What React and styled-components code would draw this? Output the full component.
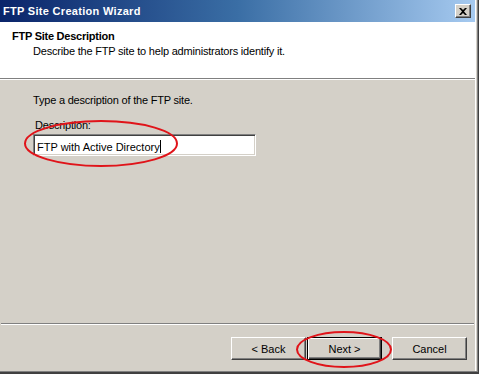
import React from "react";
import styled, { createGlobalStyle } from "styled-components";

const Global = createGlobalStyle`
  html, body { margin: 0; padding: 0; background: #d4d0c8; }
  body { font-family: "Liberation Sans", Arial, sans-serif; font-size: 11px; color: #000; letter-spacing: -0.2px; }
`;

const Window = styled.div`
  position: relative;
  width: 479px;
  height: 374px;
  box-sizing: border-box;
  display: flex;
  flex-direction: column;
  background: #d4d0c8;
  border-right: 1px solid #404040;
  border-bottom: 2px solid #404040;
  box-shadow: inset -1px -1px 0 #808080, inset -2px 0 0 #d4d0c8, inset -3px 0 0 #ffffff;
  overflow: hidden;
`;

const TitleBar = styled.div`
  height: 22px;
  flex: none;
  display: flex;
  align-items: center;
  justify-content: space-between;
  padding: 0 4px 0 3px;
  margin-right: 3px;
  background: linear-gradient(to right, #0a246a 0%, #3a6ea5 50%, #a6caf0 100%);
  color: #fff;
  font-weight: bold;
  font-size: 11px;
  letter-spacing: 0.3px;
`;

const CloseButton = styled.div`
  width: 16px;
  height: 14px;
  box-sizing: border-box;
  background: #d4d0c8;
  border: 1px solid;
  border-color: #fff #404040 #404040 #fff;
  box-shadow: inset -1px -1px 0 #808080;
  display: flex;
  align-items: center;
  justify-content: center;
`;

const Header = styled.div`
  height: 57px;
  flex: none;
  box-sizing: border-box;
  background: #fff;
  margin-right: 3px;
  border-bottom: 1px solid #808080;
  box-shadow: 0 1px 0 #fff;
  padding: 8px 0 0 12px;
`;

const HeaderTitle = styled.div`
  font-weight: bold;
  font-size: 11px;
  line-height: 13px;
  letter-spacing: -0.25px;
`;

const HeaderSub = styled.div`
  margin: 2px 0 0 21px;
  line-height: 13px;
`;

const Body = styled.div`
  flex: 1;
  padding: 15px 0 0 33px;
  margin-right: 3px;
`;

const Text = styled.div`
  line-height: 13px;
`;

const Label = styled.div`
  line-height: 13px;
  margin: 12px 0 2px 2px;
`;

const Input = styled.div`
  width: 223px;
  height: 22px;
  box-sizing: border-box;
  background: #fff;
  border: 1px solid;
  border-color: #808080 #fff #fff #808080;
  box-shadow: inset 1px 1px 0 #404040, inset -1px -1px 0 #d4d0c8;
  padding: 3px 0 0 3px;
  line-height: 14px;
  letter-spacing: 0;
  display: flex;
  align-items: center;
`;

const Caret = styled.span`
  display: inline-block;
  width: 1px;
  height: 13px;
  background: #000;
`;

const Separator = styled.div`
  height: 1px;
  margin: 0 4px 0 1px;
  background: #808080;
  border-bottom: 1px solid #fff;
  flex: none;
`;

const Footer = styled.div`
  height: 47px;
  flex: none;
  display: flex;
  align-items: flex-start;
  padding: 12px 0 0 231px;
  box-sizing: border-box;
  letter-spacing: 0;
`;

const Button = styled.div`
  width: 75px;
  height: 23px;
  box-sizing: border-box;
  display: flex;
  align-items: center;
  justify-content: center;
  background: #d4d0c8;
  margin-left: ${(p) => p.$gap || 0}px;
  border: 1px solid;
  border-color: ${(p) => (p.$default ? "#000" : "#fff #404040 #404040 #fff")};
  box-shadow: ${(p) =>
    p.$default
      ? "inset 1px 1px 0 #fff, inset -1px -1px 0 #404040, inset -2px -2px 0 #808080"
      : "inset -1px -1px 0 #808080"};
`;

const Ellipse = styled.svg`
  position: absolute;
  overflow: visible;
  pointer-events: none;
`;

export default function App() {
  return (
    <>
      <Global />
      <Window>
        <TitleBar>
          <span>FTP Site Creation Wizard</span>
          <CloseButton>
            <svg width="8" height="7" viewBox="0 0 8 7">
              <path d="M0 0h2l2 2 2-2h2L5 3.5 8 7H6L4 5 2 7H0l3-3.5z" fill="#000" />
            </svg>
          </CloseButton>
        </TitleBar>
        <Header>
          <HeaderTitle>FTP Site Description</HeaderTitle>
          <HeaderSub>Describe the FTP site to help administrators identify it.</HeaderSub>
        </Header>
        <Body>
          <Text>Type a description of the FTP site.</Text>
          <Label>Description:</Label>
          <Input>
            FTP with Active Directory<Caret />
          </Input>
        </Body>
        <Separator />
        <Footer>
          <Button>&lt; Back</Button>
          <Button $default $gap={1}>Next &gt;</Button>
          <Button $gap={10}>Cancel</Button>
        </Footer>
        <Ellipse style={{ left: 24, top: 120 }} width="154" height="47">
          <ellipse cx="77" cy="23.5" rx="76" ry="22.5" fill="none" stroke="#e0141a" strokeWidth="2" />
        </Ellipse>
        <Ellipse style={{ left: 296, top: 331 }} width="96" height="37">
          <ellipse cx="48" cy="18.5" rx="47" ry="17.5" fill="none" stroke="#e0141a" strokeWidth="2" />
        </Ellipse>
      </Window>
    </>
  );
}
